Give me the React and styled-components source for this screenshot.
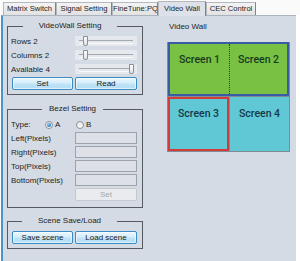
import React from 'react';
import styled, { createGlobalStyle } from 'styled-components';

const GlobalStyle = createGlobalStyle`
  html, body { margin: 0; padding: 0; background: #fff; }
  body { font-family: "Liberation Sans", Arial, sans-serif; color: #1c1c1c; }
  * { box-sizing: border-box; }
`;

const tabs = [
  { name: 'Matrix Switch', width: 53 },
  { name: 'Signal Setting', width: 56 },
  { name: 'FineTune:PQ', width: 46 },
  { name: 'Video Wall', width: 48, active: true },
  { name: 'CEC Control', width: 50 },
];

const sliders = [
  { label: 'Rows 2', pos: 0.1 },
  { label: 'Columns 2', pos: 0.1 },
  { label: 'Available 4', pos: 1 },
];

const bezelFields = ['Left(Pixels)', 'Right(Pixels)', 'Top(Pixels)', 'Bottom(Pixels)'];

const Frame = styled.div`
  width: 300px;
  height: 261px;
  background: #fff;
  display: flex;
  flex-direction: column;
  padding-left: 1px;
  overflow: hidden;
`;

const TabBar = styled.div`
  height: 15px;
  display: flex;
  align-items: flex-end;
  padding-left: 2px;
  background: #fafafa;
`;

const Tab = styled.div`
  width: ${p => p.$width}px;
  height: ${p => (p.$active ? 15 : 13)}px;
  margin-bottom: ${p => (p.$active ? -1 : 0)}px;
  line-height: ${p => (p.$active ? 14 : 12)}px;
  font-size: 7.6px;
  text-align: center;
  white-space: nowrap;
  overflow: hidden;
  border: 1px solid #b4b8bd;
  border-right-color: #7f8388;
  border-bottom: none;
  background: ${p => (p.$active ? '#dde2ea' : 'linear-gradient(#f4f4f4, #e2e2e2)')};
  position: relative;
  z-index: ${p => (p.$active ? 1 : 0)};
`;

const Page = styled.div`
  flex: 1;
  display: flex;
  margin-right: 4px;
  background: #d5dbe4;
  border-left: 2px solid #4c93c6;
  border-top: 1px solid #aab3bf;
  padding: 5px 0 0 4px;
`;

const LeftCol = styled.div`
  width: 136px;
  display: flex;
  flex-direction: column;
`;

const RightCol = styled.div`
  margin-left: 24px;
  display: flex;
  flex-direction: column;
`;

const Group = styled.fieldset`
  margin: ${p => p.$top}px 0 0 0;
  padding: 0;
  border: 1px solid #555a60;
  min-width: 0;
`;

const Legend = styled.legend`
  margin-left: ${p => p.$left}px;
  width: ${p => p.$width}px;
  padding: 0;
  font-size: 8px;
  line-height: 10px;
  text-align: left;
  color: #222;
  span {
    display: block;
    text-align: center;
  }
`;

const GroupBody = styled.div`
  display: flex;
  flex-direction: column;
  gap: ${p => p.$gap || 0}px;
  padding: ${p => p.$pad};
`;

const Row = styled.div`
  height: ${p => p.$h || 14}px;
  display: flex;
  align-items: center;
  font-size: 8px;
`;

const Label = styled.span`
  width: ${p => p.$w || 64}px;
  flex-shrink: 0;
  white-space: nowrap;
`;

const SliderBox = styled.div`
  width: 62px;
  height: 10px;
  background: #e5e8ed;
  position: relative;
  &::before {
    content: '';
    position: absolute;
    left: 4px;
    right: 4px;
    top: 4px;
    height: 2px;
    border-top: 1px solid #a4a9b0;
    border-bottom: 1px solid #f7f8fa;
  }
`;

const Thumb = styled.div`
  position: absolute;
  top: 0;
  width: 5px;
  height: 10px;
  background: linear-gradient(#fbfbfb, #e3e5e8);
  border: 1px solid #8a9098;
  border-radius: 1px 1px 3px 3px;
`;

const ButtonRow = styled.div`
  display: grid;
  grid-template-columns: 61px 62px;
  gap: 2px;
  margin-left: 1px;
`;

const Button = styled.div`
  height: 13px;
  width: ${p => (p.$w ? `${p.$w}px` : 'auto')};
  margin-left: ${p => p.$ml || 0}px;
  display: flex;
  align-items: center;
  justify-content: center;
  font-size: 8px;
  border-radius: 2px;
  border: 1px solid ${p => (p.$disabled ? '#c4c9cf' : '#3a8cc4')};
  color: ${p => (p.$disabled ? '#a3a7ad' : '#1a1a1a')};
  background: ${p =>
    p.$disabled
      ? '#e9ebef'
      : 'linear-gradient(#eaf6fd 0%, #d6eefb 45%, #bfe3f7 55%, #b4ddf4 100%)'};
  box-shadow: ${p => (p.$disabled ? 'none' : 'inset 0 0 0 1px rgba(255,255,255,0.6)')};
`;

const RadioGroup = styled.div`
  width: ${p => p.$w}px;
  display: flex;
  align-items: center;
  gap: 2px;
`;

const RadioDot = styled.span`
  width: 8px;
  height: 8px;
  border-radius: 50%;
  border: 1px solid #8b9199;
  background: linear-gradient(#e6e8eb, #fbfbfc);
  display: flex;
  align-items: center;
  justify-content: center;
  &::after {
    content: '';
    width: 4px;
    height: 4px;
    border-radius: 50%;
    display: ${p => (p.$checked ? 'block' : 'none')};
    background: radial-gradient(circle at 35% 35%, #8fd0f5, #1e6fb8 70%);
  }
`;

const Field = styled.div`
  width: 62px;
  height: 12px;
  background: #dde1e7;
  border: 1px solid #9da3ab;
`;

const WallTitle = styled.div`
  font-size: 8px;
  line-height: 10px;
  padding-left: 2px;
  margin-top: 1px;
`;

const Wall = styled.div`
  margin-top: 10px;
  width: 123px;
  height: 110px;
  display: flex;
  flex-direction: column;
  background: #808b95;
  border: 1px solid #808b95;
  border-top: none;
`;

const WallGroup = styled.div`
  height: 54px;
  display: grid;
  grid-template-columns: 59px 1fr;
  border: 2px solid #3a5ba6;
`;

const WallRow = styled.div`
  flex: 1;
  display: grid;
  grid-template-columns: 61px 1fr;
  gap: 1px;
  padding-top: 1px;
`;

const Screen = styled.div`
  background: ${p => (p.$kind === 'green' ? '#79c142' : '#5fc8d4')};
  color: ${p => (p.$kind === 'green' ? '#183a22' : '#17394a')};
  font-family: Roboto, "Liberation Sans", sans-serif;
  font-weight: 500;
  font-size: 10.5px;
  line-height: 12px;
  text-align: center;
  border: ${p => (p.$selected ? '2px solid #d33c3a' : 'none')};
  padding-top: ${p => (p.$selected ? 9 : p.$kind === 'green' ? 10 : 11)}px;
  border-left: ${p => (p.$divided ? '1px dotted #27402a' : p.$selected ? '2px solid #d33c3a' : 'none')};
`;

export default function App() {
  return (
    <>
      <GlobalStyle />
      <Frame>
        <TabBar>
          {tabs.map(t => (
            <Tab key={t.name} $width={t.width} $active={t.active}>
              {t.name}
            </Tab>
          ))}
        </TabBar>
        <Page>
          <LeftCol>
            <Group $top={0}>
              <Legend $left={15} $width={94}><span>VideoWall Setting</span></Legend>
              <GroupBody $pad="3px 4px 4px 3px">
                {sliders.map(s => (
                  <Row key={s.label}>
                    <Label>{s.label}</Label>
                    <SliderBox>
                      <Thumb style={{ left: 3 + s.pos * 51 }} />
                    </SliderBox>
                  </Row>
                ))}
                <ButtonRow style={{ marginTop: 1 }}>
                  <Button>Set</Button>
                  <Button>Read</Button>
                </ButtonRow>
              </GroupBody>
            </Group>

            <Group $top={9}>
              <Legend $left={34} $width={61}><span>Bezel Setting</span></Legend>
              <GroupBody $pad="5px 4px 6px 3px" $gap={2}>
                <Row $h={11}>
                  <Label $w={34}>Type:</Label>
                  <RadioGroup $w={31}>
                    <RadioDot $checked />A
                  </RadioGroup>
                  <RadioGroup $w={20}>
                    <RadioDot />B
                  </RadioGroup>
                </Row>
                {bezelFields.map(f => (
                  <Row key={f} $h={12}>
                    <Label>{f}</Label>
                    <Field />
                  </Row>
                ))}
                <Button $disabled $w={62} $ml={64}>Set</Button>
              </GroupBody>
            </Group>

            <Group $top={8}>
              <Legend $left={14} $width={95}><span>Scene Save/Load</span></Legend>
              <GroupBody $pad="5px 4px 4px 3px">
                <ButtonRow>
                  <Button>Save scene</Button>
                  <Button>Load scene</Button>
                </ButtonRow>
              </GroupBody>
            </Group>
          </LeftCol>

          <RightCol>
            <WallTitle>Video Wall</WallTitle>
            <Wall>
              <WallGroup>
                <Screen $kind="green">Screen 1</Screen>
                <Screen $kind="green" $divided>Screen 2</Screen>
              </WallGroup>
              <WallRow>
                <Screen $kind="cyan" $selected>Screen 3</Screen>
                <Screen $kind="cyan">Screen 4</Screen>
              </WallRow>
            </Wall>
          </RightCol>
        </Page>
      </Frame>
    </>
  );
}
